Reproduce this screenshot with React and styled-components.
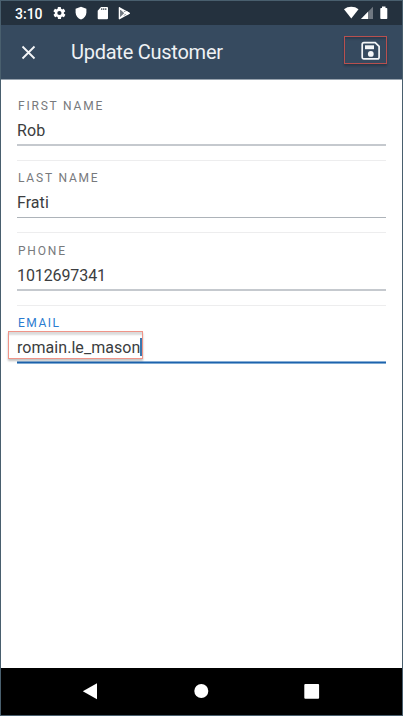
import React from "react";
import styled, { createGlobalStyle } from "styled-components";

const GlobalStyle = createGlobalStyle`
  * { box-sizing: border-box; }
  body { margin: 0; font-family: Roboto, "Noto Sans", sans-serif; background: #fff; }
`;

const Screen = styled.div`
  width: 403px;
  height: 716px;
  display: flex;
  flex-direction: column;
  border: 1px solid #495f6e;
  background: #fff;
  overflow: hidden;
`;

const StatusBar = styled.div`
  height: 24px;
  flex: none;
  display: flex;
  align-items: center;
  padding: 0 14px;
  background: #24313e;
  color: #fff;
`;

const Clock = styled.span`
  width: 38px;
  padding-top: 1px;
  font-size: 14px;
  font-weight: 500;
  line-height: 24px;
  white-space: nowrap;
`;

const StatusIcons = styled.svg`
  display: block;
  margin-left: ${(p) => (p.$end ? "auto" : "0")};
`;

const AppBar = styled.header`
  height: 54px;
  flex: none;
  display: flex;
  align-items: center;
  padding: 0 15px 0 20px;
  background: #364a5f;
`;

const Title = styled.h1`
  flex: 1;
  margin: 0 0 0 35px;
  font-size: 20px;
  line-height: 24px;
  font-weight: 400;
  letter-spacing: -0.25px;
  color: #eef1f4;
  white-space: nowrap;
`;

const IconButton = styled.button`
  display: flex;
  padding: 0;
  border: 0;
  background: none;
  color: #f4f6f8;
`;

const SaveButton = styled(IconButton)`
  width: 43px;
  height: 28px;
  align-items: center;
  justify-content: flex-start;
  padding: 3px 0 0 16px;
  margin-top: -5px;
  border: 1px solid #b8504f;
  box-shadow: 0 2px 2px rgba(20, 30, 42, 0.4), inset 0 3px 2px -1px rgba(20, 30, 42, 0.3);
`;

const Form = styled.form`
  flex: 1;
  margin: 0;
  padding: 8px 16px 0;
  border-top: 1px solid #98a3ae;
`;

const Field = styled.label`
  display: block;
  height: ${(p) => (p.$tall ? 73 : 72)}px;
  padding-top: ${(p) => (p.$tall ? 11 : 10)}px;
  border-bottom: ${(p) => (p.$last ? "0" : "1px")} solid #ededee;
`;

const Caption = styled.span`
  display: block;
  padding-left: 1px;
  font-size: 12px;
  line-height: 14px;
  letter-spacing: ${(p) => p.$tracking}px;
  color: ${(p) => (p.$active ? "#2a7cd0" : "#77797c")};
`;

const ValueLine = styled.span`
  display: flex;
  height: 33px;
  padding-top: 8px;
  border-bottom: ${(p) => (p.$active ? "1px solid #1d63ad" : p.$tall ? "2px solid #c5c9ce" : "1px solid #adb3b9")};
  box-shadow: ${(p) => (p.$active ? "0 1px #7ea9d2, inset 0 -1px #86aed6" : "none")};
`;

const Value = styled.span`
  position: relative;
  height: 20px;
  font-size: 16px;
  line-height: 20px;
  letter-spacing: ${(p) => p.$tracking}px;
  color: #3b3d40;
  white-space: nowrap;
`;

const Caret = styled.span`
  width: 2px;
  height: 18px;
  background: #3c78ae;
`;

const Highlight = styled.span`
  position: absolute;
  left: -9px;
  top: -7px;
  width: 135px;
  height: 28px;
  border: 1px solid #f09488;
  box-shadow: 0 2px 2px rgba(0, 0, 0, 0.25), inset 0 4px 2px -1px rgba(0, 0, 0, 0.14);
`;

const NavBar = styled.nav`
  height: 47px;
  flex: none;
  background: #000;
`;

const fields = [
  { caption: "FIRST NAME", value: "Rob", tall: true, ct: 1.8, vt: 0.1 },
  { caption: "LAST NAME", value: "Frati", tall: false, ct: 1.8, vt: 0.05 },
  { caption: "PHONE", value: "1012697341", tall: true, ct: 1.8, vt: -0.1 },
  { caption: "EMAIL", value: "romain.le_mason", tall: false, ct: 1.5, vt: 0.05, active: true },
];

export default function App() {
  return (
    <>
      <GlobalStyle />
      <Screen>
        <StatusBar>
          <Clock>3:10</Clock>
          <StatusIcons width="80" height="24" viewBox="53 1 80 24" fill="#fff">
            <g transform="translate(52.2 5.800) scale(.6)">
              <path d="M19.4 13c.1-.3.1-.6.1-1s0-.7-.1-1l2.1-1.6c.2-.1.3-.4.1-.6l-2-3.5c-.1-.2-.4-.3-.6-.2l-2.5 1c-.5-.4-1.1-.7-1.7-1l-.4-2.6c0-.3-.2-.5-.5-.5h-4c-.2 0-.4.2-.5.4l-.4 2.7c-.6.2-1.1.6-1.7 1l-2.5-1c-.2-.1-.5 0-.6.2l-2 3.5c-.1.2-.1.5.1.6L4.6 11c-.1.3-.1.7-.1 1s0 .7.1 1l-2.1 1.6c-.2.1-.3.4-.1.6l2 3.5c.1.2.4.3.6.2l2.5-1c.5.4 1.1.7 1.7 1l.4 2.7c.1.2.3.4.5.4h4c.2 0 .5-.2.5-.4l.4-2.7c.6-.2 1.2-.6 1.7-1l2.5 1c.2.1.5 0 .6-.2l2-3.5c.1-.2.1-.5-.1-.6zM12 15.500a3.500 3.500 0 1 1 0-7 3.500 3.500 0 0 1 0 7z" />
            </g>
            <path d="M81 6.800l5.400 2v3.700c0 3.400-2.200 5.800-5.400 7-3.200-1.200-5.400-3.600-5.400-7V8.800z" />
            <path fillRule="evenodd" d="M101 7h6q1 0 1 1v10.300q0 1-1 1h-8.300q-1 0-1-1v-7.500zM101.300 8.300v1.700h1v-1.700zM103.300 8.300v1.700h1v-1.700zM105.300 8.300v1.700h1v-1.700z" />
            <path d="M119.400 7.500v11.500l5.700-5.700z" opacity=".35" />
            <path d="M119.400 7.700l10 5.600-10 5.500zM119.400 7.700l7.500 7.200M119.400 18.800l7.500-7.300" fill="none" stroke="#fff" strokeWidth="1.300" strokeLinejoin="round" />
            <path d="M124.800 13.300l2.200-2 2.800 2-2.800 2z" />
          </StatusIcons>
          <StatusIcons $end width="46" height="24" viewBox="342 1 46 24" fill="#fff">
            <path d="M344 9.300c4-3.300 10.500-3.300 14.500 0L351.300 18.500z" />
            <path d="M373 6.800V19H361z" opacity=".35" />
            <path d="M368 11.800V19h-7z" />
            <path d="M382 6.500h3.500V8h1q.8 0 .8.800v9.400q0 .8-.8.800h-5.400q-.8 0-.8-.8V8.800q0-.8.800-.8h.9z" />
          </StatusIcons>
        </StatusBar>
        <AppBar>
          <IconButton aria-label="Close">
            <svg width="15" height="15" viewBox="0 0 15 15" fill="none" stroke="currentColor" strokeWidth="1.800">
              <path d="M1.500 1.500l12 12M13.500 1.500l-12 12" />
            </svg>
          </IconButton>
          <Title>Update Customer</Title>
          <SaveButton aria-label="Save">
            <svg width="20" height="20" viewBox="0 0 20 20" fill="none" stroke="currentColor">
              <path d="M2.900 1.700h11.300l3.900 3.700v10.800q0 1.700-1.700 1.700H2.900q-1.700 0-1.700-1.700V3.400q0-1.700 1.700-1.700z" strokeWidth="1.700" />
              <path d="M4 4.300h9v3.900h-9z" fill="currentColor" stroke="none" />
              <circle cx="9.800" cy="12.900" r="2.900" fill="currentColor" stroke="none" />
            </svg>
          </SaveButton>
        </AppBar>
        <Form>
          {fields.map((f) => (
            <Field key={f.caption} $tall={f.tall} $last={f.active}>
              <Caption $tracking={f.ct} $active={f.active}>{f.caption}</Caption>
              <ValueLine $active={f.active} $tall={f.tall}>
                <Value $tracking={f.vt}>
                  {f.value}
                  {f.active && <Highlight />}
                </Value>
                {f.active && <Caret />}
              </ValueLine>
            </Field>
          ))}
        </Form>
        <NavBar>
          <svg width="401" height="47" viewBox="1 668 401 47" fill="#fff" display="block">
            <path d="M82.800 691.200L97 683.200V699.200z" />
            <circle cx="201.300" cy="691" r="7" />
            <rect x="304.300" y="684" width="14.800" height="14.800" rx="1" />
          </svg>
        </NavBar>
      </Screen>
    </>
  );
}
